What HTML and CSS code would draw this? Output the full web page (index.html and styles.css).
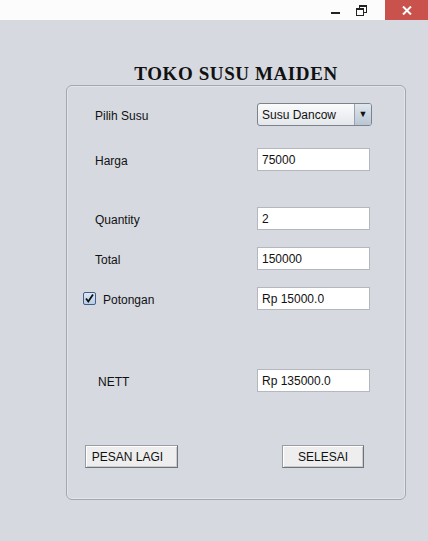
FILE: index.html
```html
<!DOCTYPE html>
<html lang="en">
<head>
    <meta charset="UTF-8">
    <title>Toko Susu Maiden</title>
    <link rel="stylesheet" href="styles.css">
</head>
<body>
<div class="titlebar">
    <span class="win-btn min"><span class="min-line"></span></span>
    <span class="win-btn restore">
        <svg width="11" height="11" viewBox="0 0 11 11">
            <rect x="3.5" y="0.5" width="7" height="7" fill="none" stroke="#222"/>
            <rect x="0.5" y="3.5" width="7" height="7" fill="#fcfcfc" stroke="#222"/>
            <line x1="0.5" y1="4.5" x2="7.5" y2="4.5" stroke="#222"/>
            <line x1="3.5" y1="1.5" x2="10.5" y2="1.5" stroke="#222"/>
        </svg>
    </span>
    <span class="win-btn close">
        <svg width="10" height="9" viewBox="0 0 10 9">
            <path d="M1 0.5 L9 8.5 M9 0.5 L1 8.5" stroke="#fff" stroke-width="2"/>
        </svg>
    </span>
</div>

<div class="content">
    <h1 class="title">TOKO SUSU MAIDEN</h1>

    <div class="panel">
        <div class="row row-first">
            <span class="label">Pilih Susu</span>
            <div class="combo">
                <span class="combo-text">Susu Dancow</span>
                <span class="combo-arrow">&#9660;</span>
            </div>
        </div>
        <div class="row row-harga">
            <span class="label">Harga</span>
            <div class="field">75000</div>
        </div>
        <div class="row row-qty">
            <span class="label">Quantity</span>
            <div class="field">2</div>
        </div>
        <div class="row row-near">
            <span class="label">Total</span>
            <div class="field">150000</div>
        </div>
        <div class="row row-near">
            <label class="label check-label">
                <span class="checkbox">
                    <svg width="13" height="13" viewBox="0 0 13 13">
                        <path d="M3 6.5 L5.3 9.5 L10 2.5" fill="none" stroke="#111" stroke-width="1.8"/>
                    </svg>
                </span>
                <span class="check-text">Potongan</span>
            </label>
            <div class="field">Rp 15000.0</div>
        </div>
        <div class="row row-nett">
            <span class="label nett-label">NETT</span>
            <div class="field">Rp 135000.0</div>
        </div>
        <div class="buttons">
            <button class="btn btn-pesan">PESAN LAGI</button>
            <button class="btn btn-selesai">SELESAI</button>
        </div>
    </div>
</div>
</body>
</html>
```

FILE: styles.css
```css
* {
    margin: 0;
    padding: 0;
    box-sizing: border-box;
}
body {
    font-family: "Liberation Sans", Arial, sans-serif;
    font-size: 12px;
    color: #111;
    background-color: #d6d9e0;
    width: 428px;
    height: 541px;
    overflow: hidden;
}

/* window bar */
.titlebar {
    height: 20px;
    background-color: #fcfcfc;
    display: flex;
    justify-content: flex-end;
    align-items: stretch;
}
.win-btn {
    display: flex;
    align-items: center;
    justify-content: center;
}
.min {
    width: 26px;
}
.min-line {
    width: 9px;
    height: 2px;
    background-color: #222;
    margin-top: 6px;
}
.restore {
    width: 26px;
    margin-right: 11px;
}
.close {
    width: 43px;
    background-color: #c9524c;
}

.content {
    padding-left: 66px;
}
.title {
    font-family: "Liberation Serif", "Times New Roman", serif;
    font-weight: bold;
    font-size: 19px;
    letter-spacing: 0.6px;
    color: #111;
    text-align: center;
    width: 340px;
    margin-top: 43px;
    line-height: 22px;
}

.panel {
    width: 340px;
    height: 415px;
    border: 1px solid #a3a8b0;
    border-radius: 6px;
    padding: 17px 0 0 28px;
    box-shadow: inset 0 0 0 1px #e2e5ea;
}
.row {
    display: flex;
    align-items: center;
    height: 23px;
}
.row-harga {
    margin-top: 22px;
}
.row-qty {
    margin-top: 36px;
}
.row-near {
    margin-top: 17px;
}
.row-nett {
    margin-top: 59px;
}
.label {
    width: 162px;
    padding-top: 2px;
}
.check-label {
    display: flex;
    align-items: center;
    margin-left: -12px;
    width: 174px;
    padding-top: 0;
}
.check-text {
    padding-top: 2px;
}
.nett-label {
    padding-left: 3px;
}

.field {
    width: 113px;
    height: 23px;
    background-color: #fff;
    border: 1px solid #b4b8be;
    padding: 2px 4px 0;
    line-height: 19px;
}

.combo {
    width: 115px;
    height: 23px;
    display: flex;
    border: 1px solid #7d838b;
    border-radius: 3px;
    background: linear-gradient(#fbfbfc, #e4e7eb);
    overflow: hidden;
}
.combo-text {
    flex: 1;
    padding: 2px 0 0 4px;
    line-height: 19px;
}
.combo-arrow {
    width: 17px;
    border-left: 1px solid #9aa3ad;
    background: linear-gradient(#dfe6ee, #b9c6d3);
    font-size: 9px;
    text-align: center;
    line-height: 20px;
    color: #111;
}

.checkbox {
    width: 13px;
    height: 13px;
    border: 1px solid #3f5f88;
    border-radius: 2px;
    background: linear-gradient(#dbe7f5, #b9cde6);
    margin-right: 7px;
    display: flex;
}
.checkbox svg {
    margin: -1px;
}

.buttons {
    display: flex;
    margin-top: 53px;
    margin-left: -11px;
}
.btn {
    font-family: "Liberation Sans", Arial, sans-serif;
    font-size: 12px;
    color: #111;
    height: 23px;
    padding-top: 1px;
    background-color: #eeeeef;
    border: 1px solid #9a9ea4;
    border-right-color: #6f7378;
    border-bottom-color: #6f7378;
    box-shadow: inset 1px 1px 0 #ffffff, inset -1px -1px 0 #c8cbcf;
}
.btn-pesan {
    width: 93px;
    margin-left: 1px;
    padding-right: 8px;
}
.btn-selesai {
    width: 82px;
    margin-left: 104px;
}
```
